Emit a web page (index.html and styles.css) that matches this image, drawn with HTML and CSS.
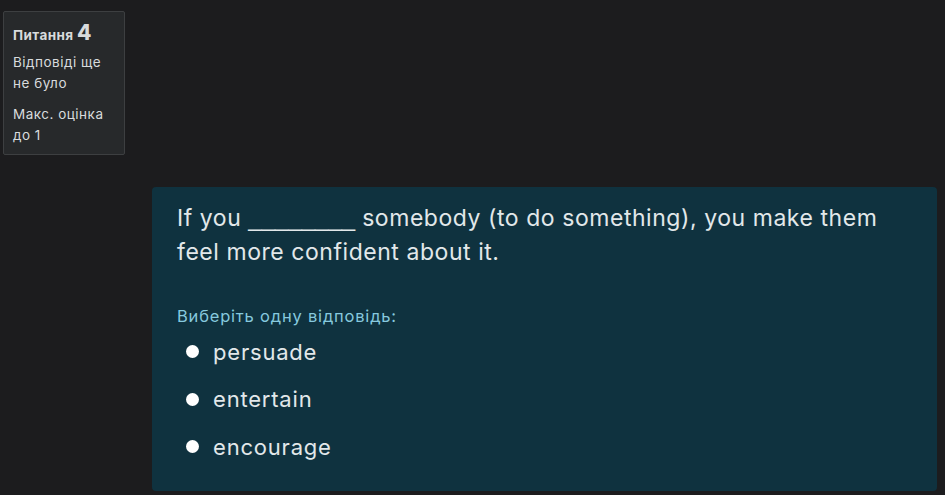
FILE: index.html
```html
<!DOCTYPE html>
<html lang="uk">
<head>
<meta charset="utf-8">
<link rel="stylesheet" href="styles.css">
</head>
<body>
<div class="page">
  <aside class="info">
    <h3 class="qno">Питання <span class="num">4</span></h3>
    <div class="state">Відповіді ще не було</div>
    <div class="grade">Макс. оцінка до 1</div>
  </aside>
  <section class="content">
    <div class="formulation">
      <div class="qtext">If you <span class="blank">________</span> somebody (to do something), you make them feel more confident about it.</div>
      <div class="ablock">
        <div class="prompt">Виберіть одну відповідь:</div>
        <div class="answer">
          <label class="opt"><span class="radio"></span><span>persuade</span></label>
          <label class="opt"><span class="radio"></span><span>entertain</span></label>
          <label class="opt"><span class="radio"></span><span>encourage</span></label>
        </div>
      </div>
    </div>
  </section>
</div>
</body>
</html>
```
FILE: styles.css
```css
html, body {
  margin: 0;
  padding: 0;
  background: #1c1c1e;
  font-family: "Inter", "Noto Sans", sans-serif;
  color: #dfe5e8;
}
.page {
  height: 495px;
  overflow: hidden;
}
.info {
  width: 101px;
  margin: 11px 0 0 3px;
  padding: 9px 10px 8px 9px;
  background: #27292b;
  border: 1px solid #3d3f41;
  border-radius: 2px;
  font-size: 13.5px;
  line-height: 21px;
  letter-spacing: 0.5px;
  color: #d8dbdd;
}
.qno {
  margin: 0 0 5px 0;
  font-size: 13.5px;
  font-weight: 700;
  line-height: 24px;
  letter-spacing: 0.4px;
}
.num {
  font-size: 21px;
  font-weight: 800;
}
.state {
  margin-bottom: 10px;
}
.content {
  margin: 32px 8px 0 152px;
}
.formulation {
  background: #0f323f;
  border-radius: 4px;
  padding: 14px 25px 20px 25px;
}
.qtext {
  font-size: 23px;
  line-height: 34px;
  letter-spacing: 0.55px;
  color: #e2e8ea;
}
.blank {
  font-family: "Liberation Sans", sans-serif;
  letter-spacing: 0;
  font-size: 24px;
  line-height: 0;
}
.ablock {
  margin-top: 35px;
}
.prompt {
  font-size: 16.5px;
  line-height: 24px;
  letter-spacing: 0.8px;
  color: #86c9de;
}
.answer {
  display: flex;
  flex-direction: column;
  margin-top: 0;
}
.opt {
  display: flex;
  align-items: center;
  gap: 14px;
  height: 47.5px;
  padding-left: 9px;
  font-size: 22px;
  letter-spacing: 0.8px;
  color: #e2e8ea;
}
.radio {
  width: 13px;
  height: 13px;
  border-radius: 50%;
  background: #ffffff;
  flex: none;
}
```
